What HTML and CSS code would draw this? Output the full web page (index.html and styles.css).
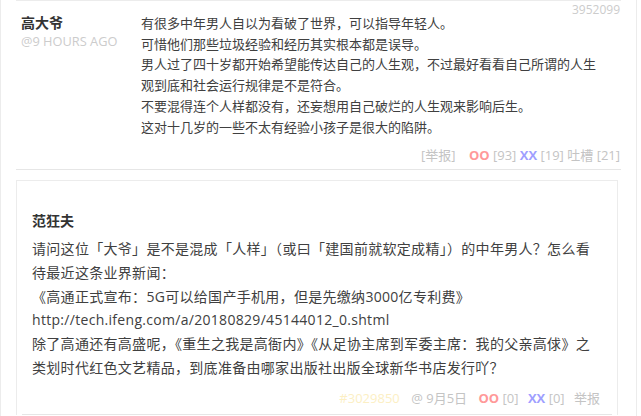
FILE: index.html
```html
<!DOCTYPE html>
<html lang="zh">
<head>
<meta charset="utf-8">
<title>吐槽</title>
<link rel="stylesheet" href="styles.css">
</head>
<body>
<div class="wrap">
  <div class="comment">
    <span class="cid">3952099</span>
    <div class="row">
      <div class="author">
        <strong class="name">高大爷</strong>
        <small class="time">@9 HOURS AGO</small>
      </div>
      <div class="text">
        <p>有很多中年男人自以为看破了世界，可以指导年轻人。</p>
        <p>可惜他们那些垃圾经验和经历其实根本都是误导。</p>
        <p>男人过了四十岁都开始希望能传达自己的人生观，不过最好看看自己所谓的人生观到底和社会运行规律是不是符合。</p>
        <p>不要混得连个人样都没有，还妄想用自己破烂的人生观来影响后生。</p>
        <p>这对十几岁的一些不太有经验小孩子是很大的陷阱。</p>
      </div>
    </div>
    <div class="vote">
      <span class="rep">[举报]</span>
      <span class="oo">OO</span> <span class="cnt">[93]</span>
      <span class="xx">XX</span> <span class="cnt">[19]</span>
      <span class="tc">吐槽 [21]</span>
    </div>
  </div>
  <div class="tucao">
    <div class="tname">范狂夫</div>
    <div class="tbody">请问这位「大爷」是不是混成「人样」（或曰「建国前就软定成精」）的中年男人？怎么看待最近这条业界新闻：<br>《高通正式宣布：5G可以给国产手机用，但是先缴纳3000亿专利费》<br>http://tech.ifeng.com/a/20180829/45144012_0.shtml<br>除了高通还有高盛呢，《重生之我是高衙内》《从足协主席到军委主席：我的父亲高俅》之类划时代红色文艺精品，到底准备由哪家出版社出版全球新华书店发行吖？</div>
    <div class="tfoot">
      <span class="tid">#3029850</span>
      <span class="at">@ 9月5日</span>
      <span class="oo">OO</span> <span class="cnt">[0]</span>
      <span class="xx">XX</span> <span class="cnt">[0]</span>
      <span class="rep2">举报</span>
    </div>
    <div class="thr"></div>
  </div>
</div>
</body>
</html>
```

FILE: styles.css
```css
html, body {
  margin: 0;
  padding: 0;
  background: #fff;
}
body {
  font-family: "Open Sans", "Noto Sans CJK SC", sans-serif;
  color: #404040;
  overflow: hidden;
}
.wrap {
  width: 605px;
  min-height: 420px;
  border-left: 1px solid #ececec;
  border-right: 1px solid #ececec;
  padding: 0 15px 0 15px;
}
.comment {
  position: relative;
  border-top: 1px solid #ececec;
  border-bottom: 1px solid #e6e6e6;
  padding: 12px 0 5px 0;
}
.cid {
  position: absolute;
  top: 1px;
  right: 1px;
  font-size: 12px;
  line-height: 16px;
  color: #cccccc;
}
.row {
  display: flex;
}
.author {
  width: 120px;
  padding-left: 5px;
  display: flex;
  flex-direction: column;
}
.name {
  font-size: 14px;
  line-height: 20px;
  color: #333;
  font-weight: bold;
}
.time {
  font-size: 12.8px;
  line-height: 16px;
  color: #cccccc;
}
.text {
  width: 460px;
  font-size: 13px;
  line-height: 20.7px;
  color: #404040;
}
.text p {
  margin: 0;
}
.vote {
  margin-top: 9px;
  text-align: right;
  padding-right: 1px;
  font-size: 13px;
  line-height: 18px;
  color: #c4c4c4;
}
.rep {
  margin-right: 10px;
}
.oo {
  color: #ff9999;
  font-weight: bold;
}
.xx {
  color: #9f9fff;
  font-weight: bold;
}
.tucao {
  margin-top: 10px;
  width: 570px;
  border: 1px solid #ececec;
  border-bottom: none;
  padding: 30px 15px 0 15px;
}
.tname {
  font-size: 14px;
  line-height: 20px;
  font-weight: bold;
  color: #333;
}
.tbody {
  width: 564px;
  margin-top: 6px;
  font-size: 14px;
  line-height: 23.7px;
  letter-spacing: 0.3px;
  color: #404040;
}
.tfoot {
  margin-top: 10px;
  text-align: right;
  padding-right: 2px;
  font-size: 13px;
  line-height: 18px;
  color: #c4c4c4;
}
.tid {
  color: #fcefc4;
  margin-right: 8px;
}
.at {
  margin-right: 8px;
}
.tfoot .cnt {
  margin-right: 6px;
}
.thr {
  margin: 7px -10px 0 -10px;
  border-top: 1px solid #e6e6e6;
}
```
